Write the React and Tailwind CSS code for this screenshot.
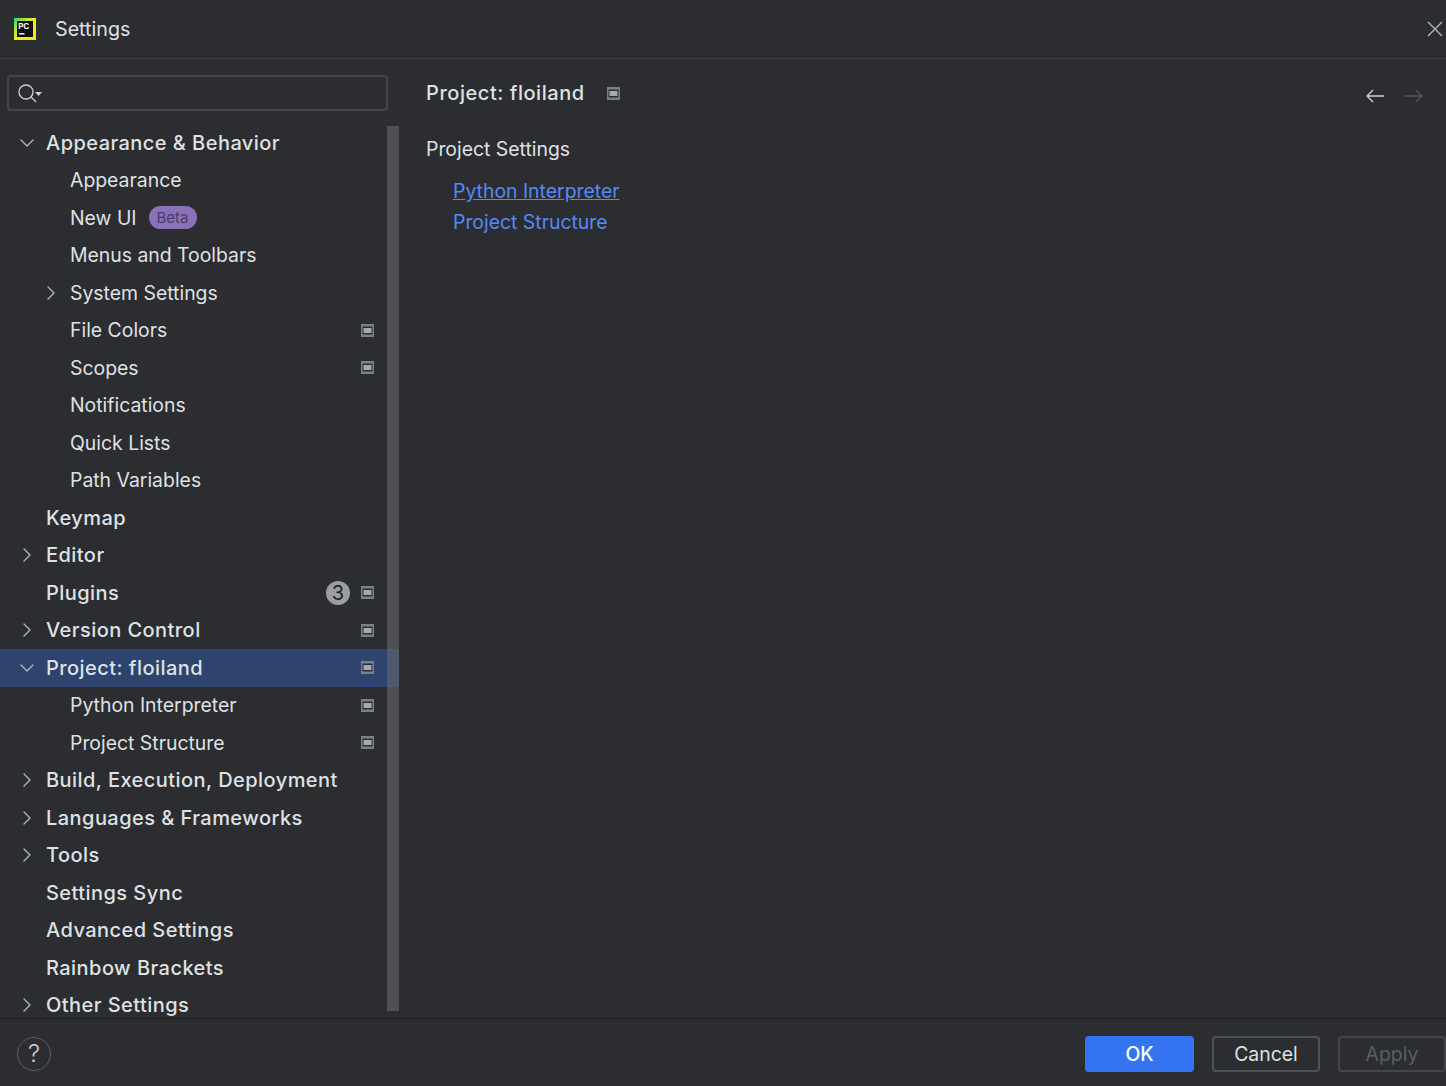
import { ChevronDown, ChevronRight } from 'lucide-react';

const FONT = "font-['Inter','Liberation_Sans',sans-serif]";

const items = [
    { label: 'Appearance & Behavior', level: 0, arrow: 'down' },
    { label: 'Appearance', level: 1 },
    { label: 'New UI', level: 1, beta: true },
    { label: 'Menus and Toolbars', level: 1 },
    { label: 'System Settings', level: 1, arrow: 'right' },
    { label: 'File Colors', level: 1, page: true },
    { label: 'Scopes', level: 1, page: true },
    { label: 'Notifications', level: 1 },
    { label: 'Quick Lists', level: 1 },
    { label: 'Path Variables', level: 1 },
    { label: 'Keymap', level: 0 },
    { label: 'Editor', level: 0, arrow: 'right' },
    { label: 'Plugins', level: 0, page: true, count: 3 },
    { label: 'Version Control', level: 0, arrow: 'right', page: true },
    { label: 'Project: floiland', level: 0, arrow: 'down', page: true, selected: true },
    { label: 'Python Interpreter', level: 1, page: true },
    { label: 'Project Structure', level: 1, page: true },
    { label: 'Build, Execution, Deployment', level: 0, arrow: 'right' },
    { label: 'Languages & Frameworks', level: 0, arrow: 'right' },
    { label: 'Tools', level: 0, arrow: 'right' },
    { label: 'Settings Sync', level: 0 },
    { label: 'Advanced Settings', level: 0 },
    { label: 'Rainbow Brackets', level: 0 },
    { label: 'Other Settings', level: 0, arrow: 'right' },
];

const PageIcon = () => (
    <svg width="13" height="13" viewBox="0 0 13 13" className="block shrink-0">
        <rect x="0" y="0" width="13" height="13" fill="#7a8085" />
        <rect x="1.5" y="2.5" width="10" height="8" fill="#2b2d30" />
        <rect x="2.5" y="4" width="8" height="5" fill="#a3aab0" />
    </svg>
);

const Logo = () => (
    <svg width="22" height="22" viewBox="0 0 22 22" className="block shrink-0">
        <defs>
            <linearGradient id="pc-edge" x1="0" y1="0" x2="1" y2="1">
                <stop offset="0" stopColor="#21d789" />
                <stop offset="0.3" stopColor="#b8e62a" />
                <stop offset="0.5" stopColor="#f0ea1c" />
            </linearGradient>
        </defs>
        <rect width="22" height="22" fill="url(#pc-edge)" />
        <rect x="3" y="3" width="16" height="16" fill="#0c0f0c" />
        <rect x="5" y="15" width="5.5" height="1.6" fill="#e8e8e8" />
        <text x="4.2" y="11.4" fontSize="8" fontWeight="700" fill="#fff" fontFamily="Inter, sans-serif">PC</text>
    </svg>
);

const TreeRow = ({ item }) => {
    const indent = item.level === 0 ? 'pl-[46px]' : 'pl-[70px]';
    const arrowPos = item.level === 0 ? 'left-[15px]' : 'left-[39px]';
    return (
        <div className={`relative flex h-[37.5px] items-center pr-[25px] ${indent} ${item.selected ? 'bg-[#2e436e]' : ''}`}>
            {item.arrow === 'down' && <ChevronDown size={24} strokeWidth={1.3} className={`absolute ${arrowPos} text-[#b4b8bf]`} />}
            {item.arrow === 'right' && <ChevronRight size={24} strokeWidth={1.3} className={`absolute ${arrowPos} text-[#b4b8bf]`} />}
            <span className={`whitespace-nowrap text-[#dfe1e5] ${item.level === 0 ? 'text-[20px] font-medium tracking-[0.45px]' : 'pt-[1px] text-[19.4px] font-normal'}`}>{item.label}</span>
            {item.beta && (
                <span className="ml-[12px] flex h-[23px] w-[48px] items-center justify-center rounded-full bg-[#8b72b8] text-[15px] text-[#4a3a6b]">Beta</span>
            )}
            <span className="ml-auto flex items-center">
                {item.count && (
                    <span className="mr-[11px] flex h-[24px] w-[24px] items-center justify-center rounded-full bg-[#9a9da1] text-[20px] text-[#1e1f22]">{item.count}</span>
                )}
                {item.page && <PageIcon />}
            </span>
        </div>
    );
};

const App = () => {
    return (
        <div className={`flex h-[1086px] w-[1446px] flex-col overflow-hidden bg-[#2b2d30] ${FONT}`}>
            <div className="flex h-[59px] shrink-0 items-center border-b border-[#3d3f43] pl-[14px]">
                <Logo />
                <span className="ml-[19px] pt-[1px] text-[19.7px] text-[#dfe1e5]">Settings</span>
                <svg width="16" height="16" viewBox="0 0 16 16" className="ml-auto mr-[3px] text-[#b4b8bf]">
                    <path d="M1 1 L15 15 M15 1 L1 15" stroke="currentColor" strokeWidth="1.3" fill="none" />
                </svg>
            </div>

            <div className="flex min-h-0 flex-1">
                <div className="relative w-[399px] shrink-0">
                    <div className="ml-[7px] mt-[16px] flex h-[36px] w-[381px] items-center rounded-[4px] border-2 border-[#43454a] pl-[8px]">
                        <svg width="28" height="22" viewBox="0 0 28 22" className="text-[#ced0d6]">
                            <circle cx="9" cy="10" r="7" stroke="currentColor" strokeWidth="1.3" fill="none" />
                            <path d="M14 15 L19 20" stroke="currentColor" strokeWidth="1.3" fill="none" />
                            <path d="M18 10 L25 10 L21.5 14 Z" fill="currentColor" />
                        </svg>
                    </div>
                    <div className="mt-[13px]">
                        {items.map(item => <TreeRow key={item.label} item={item} />)}
                    </div>
                    <div className="absolute bottom-[7px] right-0 top-[67px] w-[12px] bg-[#65676b]/60" />
                </div>

                <div className="relative min-w-0 flex-1 pl-[27px] pt-[20px]">
                    <div className="flex h-[28px] items-center">
                        <span className="text-[20px] font-medium tracking-[0.55px] text-[#dfe1e5]">Project: floiland</span>
                        <span className="ml-[22px]"><PageIcon /></span>
                        <span className="ml-auto mr-[22px] flex translate-y-[3px] items-center gap-[19px]">
                            <svg width="20" height="16" viewBox="0 0 20 16" className="text-[#ced0d6]">
                                <path d="M19 8 H2 M8 2 L2 8 L8 14" stroke="currentColor" strokeWidth="1.4" fill="none" />
                            </svg>
                            <svg width="20" height="16" viewBox="0 0 20 16" className="text-[#55575b]">
                                <path d="M1 8 H18 M12 2 L18 8 L12 14" stroke="currentColor" strokeWidth="1.4" fill="none" />
                            </svg>
                        </span>
                    </div>
                    <div className="mt-[28px] text-[19.4px] leading-[28px] text-[#dfe1e5]">Project Settings</div>
                    <div className="mt-[13px] flex flex-col pl-[27px] text-[19.4px] leading-[31px] text-[#548af7]">
                        <span className="underline">Python Interpreter</span>
                        <span>Project Structure</span>
                    </div>
                </div>
            </div>

            <div className="flex h-[68px] shrink-0 items-center border-t border-[#1e1f22] pl-[17px] pt-[2px]">
                <div className="flex h-[34px] w-[34px] items-center justify-center rounded-full border border-[#5a5d63] text-[24px] font-light text-[#ced0d6]">?</div>
                <div className="ml-auto flex items-center gap-[18px]">
                    <div className="flex h-[36px] w-[109px] items-center justify-center rounded-[4px] bg-[#3574f0] pt-[3px] text-[19.4px] font-medium text-white">OK</div>
                    <div className="flex h-[36px] w-[108px] items-center justify-center rounded-[4px] border-2 border-[#4e5157] pt-[3px] text-[19.4px] text-[#dfe1e5]">Cancel</div>
                    <div className="flex h-[36px] w-[108px] items-center justify-center rounded-[4px] border-2 border-[#43454a] pt-[3px] text-[19.4px] text-[#5a5d63]">Apply</div>
                </div>
            </div>
        </div>
    );
};

export default App;
